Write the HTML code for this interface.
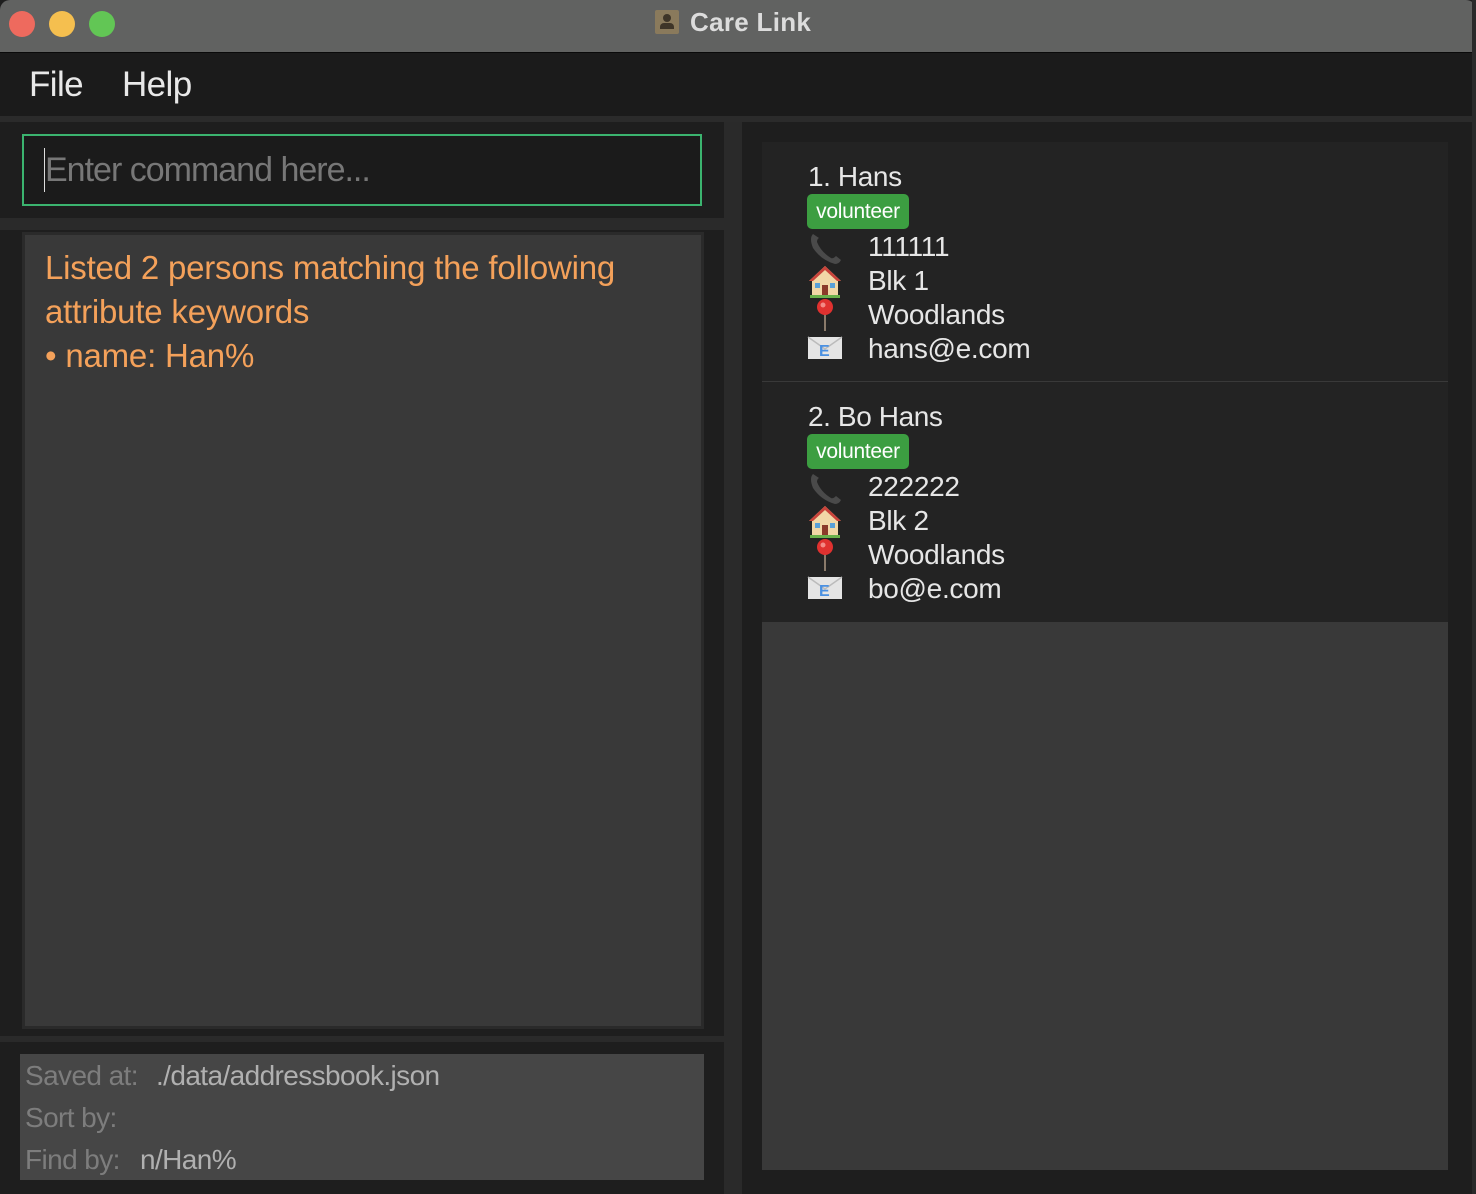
<!DOCTYPE html>
<html><head><meta charset="utf-8"><style>
*{margin:0;padding:0;box-sizing:border-box}
body{width:1476px;height:1194px;background:#1e1e1e;position:relative;overflow:hidden;font-family:"Liberation Sans",sans-serif}
.a{position:absolute}
.t{white-space:nowrap;letter-spacing:-0.6px}
</style></head><body>
<div class="a" style="left:0;top:0;width:1476px;height:52px;background:#616261;border-radius:10px 10px 0 0"></div>
<div class="a" style="left:0;top:52px;width:1476px;height:1px;background:#0a0a0a"></div>
<div class="a" style="left:9px;top:11px;width:26px;height:26px;border-radius:50%;background:#ee6a5e"></div>
<div class="a" style="left:49px;top:11px;width:26px;height:26px;border-radius:50%;background:#f5bf4f"></div>
<div class="a" style="left:89px;top:11px;width:26px;height:26px;border-radius:50%;background:#62c655"></div>
<div class="a" style="left:655px;top:10px;width:24px;height:24px;background:#8a7a5c;border-radius:2px"><div class="a" style="left:8px;top:4px;width:8px;height:8px;border-radius:50%;background:#3e3528"></div><div class="a" style="left:5px;top:13px;width:14px;height:6px;background:#3e3528;border-radius:4px 4px 0 0"></div></div>
<div class="a t" style="left:690px;top:7px;font-size:26px;font-weight:bold;color:#dcdcdc;letter-spacing:0.3px">Care Link</div>
<div class="a" style="left:0;top:53px;width:1472px;height:64px;background:#1b1b1b"></div>
<div class="a t" style="left:29px;top:65px;font-size:35px;color:#e8e8e8">File</div>
<div class="a t" style="left:122px;top:65px;font-size:35px;color:#e8e8e8">Help</div>
<div class="a" style="left:0;top:116px;width:1472px;height:6px;background:#2b2b2b"></div>
<div class="a" style="left:0;top:122px;width:724px;height:96px;background:#1e1e1e"></div>
<div class="a" style="left:22px;top:134px;width:680px;height:72px;border:2px solid #3bb46f;background:#1b1b1b"></div>
<div class="a" style="left:44px;top:148px;width:1px;height:44px;background:#ddd"></div>
<div class="a t" style="left:45px;top:151px;font-size:34px;color:#777;letter-spacing:-1px">Enter command here...</div>
<div class="a" style="left:0;top:218px;width:724px;height:12px;background:#2a2a2a"></div>
<div class="a" style="left:0;top:230px;width:724px;height:806px;background:#1e1e1e"></div>
<div class="a" style="left:22px;top:232px;width:682px;height:797px;border:3px solid #2a2a2a;background:#393939"></div>
<div class="a t" style="left:45px;top:246px;font-size:33px;line-height:44px;color:#f4a15a;letter-spacing:-0.2px">Listed 2 persons matching the following<br>attribute keywords<br>• name: Han%</div>
<div class="a" style="left:0;top:1036px;width:724px;height:6px;background:#2a2a2a"></div>
<div class="a" style="left:20px;top:1054px;width:684px;height:126px;background:#464646"></div>
<div class="a t" style="left:25px;top:1060px;font-size:28px;color:#7d7d7d">Saved at:</div>
<div class="a t" style="left:25px;top:1102px;font-size:28px;color:#7d7d7d">Sort by:</div>
<div class="a t" style="left:25px;top:1144px;font-size:28px;color:#7d7d7d">Find by:</div>
<div class="a t" style="left:156px;top:1060px;font-size:28px;color:#b0b0b0">./data/addressbook.json</div>
<div class="a t" style="left:140px;top:1144px;font-size:28px;color:#b0b0b0">n/Han%</div>
<div class="a" style="left:724px;top:122px;width:18px;height:1072px;background:#2a2a2a"></div>
<div class="a" style="left:742px;top:122px;width:730px;height:1072px;background:#1e1e1e"></div>
<div class="a" style="left:762px;top:142px;width:686px;height:1028px;background:#393939"></div>
<div class="a" style="left:1472px;top:0;width:4px;height:1194px;background:#2a2a2a"></div>

<svg width="0" height="0" style="position:absolute"><defs>
<g id="ph"><path d="M6 4 Q2 8 6 18 Q14 30 28 34 Q32 34 34 30 L29 26 Q26 29 24 28 Q14 22 10 12 Q10 9 12 8 Z" fill="#4a4a4a"/></g>
<g id="ho"><path d="M18 2 L34 17 L31 17 L31 32 L5 32 L5 17 L2 17 Z" fill="#f2d7a7"/><path d="M18 2 L34 17 L30 17 L18 6 L6 17 L2 17 Z" fill="#c9433a"/><rect x="15" y="21" width="6" height="11" fill="#8b3a2a"/><rect x="8" y="19" width="5" height="5" fill="#5aa0d8"/><rect x="23" y="19" width="5" height="5" fill="#5aa0d8"/><rect x="3" y="31" width="30" height="3" fill="#6ab04c"/></g>
<g id="pi"><rect x="17" y="16" width="2" height="18" fill="#8a7a6a"/><circle cx="18" cy="10" r="8" fill="#e0312f"/><circle cx="16" cy="8" r="2.5" fill="#f48a86"/></g>
<g id="em"><rect x="1" y="6" width="34" height="22" fill="#e4e4e4"/><path d="M1 6 L18 18 L35 6" fill="none" stroke="#bbb" stroke-width="1.5"/><text x="12" y="25" font-family="Liberation Sans" font-weight="bold" font-size="16" fill="#4a90e2">E</text></g>
</defs></svg>

<div class="a" style="left:762px;top:142px;width:686px;height:239px;background:#232323"></div>
<div class="a t" style="left:808px;top:161px;font-size:28px;color:#e6e6e6;letter-spacing:-0.4px">1. Hans</div>
<div class="a t" style="left:807px;top:194px;width:102px;height:35px;background:#3c9e41;border-radius:5px;color:#fff;font-size:21px;line-height:35px;text-align:center;letter-spacing:-0.3px">volunteer</div>
<svg class="a" style="left:807px;top:230px" width="38" height="140"><use href="#ph" y="0"/><use href="#ho" y="34"/><use href="#pi" y="67"/><use href="#em" y="101"/></svg>
<div class="a t" style="left:868px;top:230px;font-size:28px;line-height:34px;color:#e6e6e6;letter-spacing:-0.3px">111111<br>Blk 1<br>Woodlands<br>hans@e.com</div>
<div class="a" style="left:762px;top:382px;width:686px;height:240px;background:#232323"></div>
<div class="a t" style="left:808px;top:401px;font-size:28px;color:#e6e6e6;letter-spacing:-0.4px">2. Bo Hans</div>
<div class="a t" style="left:807px;top:434px;width:102px;height:35px;background:#3c9e41;border-radius:5px;color:#fff;font-size:21px;line-height:35px;text-align:center;letter-spacing:-0.3px">volunteer</div>
<svg class="a" style="left:807px;top:470px" width="38" height="140"><use href="#ph" y="0"/><use href="#ho" y="34"/><use href="#pi" y="67"/><use href="#em" y="101"/></svg>
<div class="a t" style="left:868px;top:470px;font-size:28px;line-height:34px;color:#e6e6e6;letter-spacing:-0.3px">222222<br>Blk 2<br>Woodlands<br>bo@e.com</div>
</body></html>
